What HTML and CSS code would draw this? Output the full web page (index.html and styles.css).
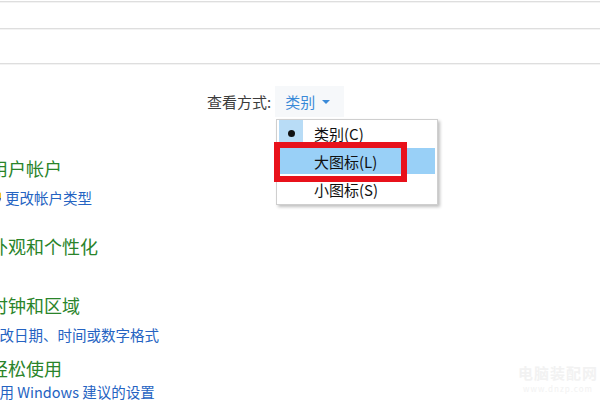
FILE: index.html
```html
<!DOCTYPE html>
<html lang="zh-CN">
<head>
    <meta charset="UTF-8">
    <title>控制面板</title>
    <link rel="stylesheet" href="styles.css">
</head>
<body>
    <div class="window">
        <div class="bar bar-top"></div>
        <div class="bar bar-address"></div>
        <div class="bar bar-search"></div>

        <div class="toolbar">
            <span class="view-label">查看方式:</span>
            <button class="view-button">类别 <span class="caret"></span></button>
        </div>

        <div class="categories">
            <div class="category cat-users">
                <a class="cat-title">用户帐户</a>
                <a class="cat-link with-shield">
                    <svg class="shield" width="16" height="16" viewBox="0 0 16 16">
                        <path d="M8 1 L14 3 V8 C14 11.5 11 14 8 15 C5 14 2 11.5 2 8 V3 Z" fill="#2b5fa8"/>
                        <path d="M8 1 L14 3 V8 H8 Z" fill="#f2c12e"/>
                        <path d="M8 8 H2 C2 11.5 5 14 8 15 Z" fill="#f2c12e"/>
                    </svg>
                    <span>更改帐户类型</span>
                </a>
            </div>
            <div class="category cat-appearance">
                <a class="cat-title">外观和个性化</a>
            </div>
            <div class="category cat-clock">
                <a class="cat-title">时钟和区域</a>
                <a class="cat-link">更改日期、时间或数字格式</a>
            </div>
            <div class="category cat-ease">
                <a class="cat-title">轻松使用</a>
                <a class="cat-link tight">使用 Windows 建议的设置</a>
            </div>
        </div>

        <!-- view menu, opened over the page -->
        <ul class="view-menu">
            <li class="menu-item checked"><span class="check"><span class="dot"></span></span>类别(C)</li>
            <li class="menu-item hover"><span class="check"></span>大图标(L)</li>
            <li class="menu-item"><span class="check"></span>小图标(S)</li>
        </ul>
        <div class="highlight-box"></div>

        <div class="watermark">
            <div class="wm-name">电脑装配网</div>
            <div class="wm-url">www.dnzp.com</div>
        </div>
    </div>
</body>
</html>
```

FILE: styles.css
```css
* {
    box-sizing: border-box;
}

body {
    margin: 0;
    background: #fff;
    font-family: "Noto Sans CJK SC", "Noto Sans", sans-serif;
}

.window {
    position: relative;
    width: 600px;
    height: 400px;
    overflow: hidden;
}

.bar {
    border-bottom: 1px solid #dedede;
    box-shadow: 0 1px 0 #f3f3f3;
}

.bar-top {
    height: 2px;
}

.bar-address {
    height: 27px;
}

.bar-search {
    height: 35px;
}

.toolbar {
    display: flex;
    align-items: center;
    margin-top: 22px;
    height: 31px;
    padding-left: 207px;
}

.view-label {
    font-size: 15px;
    color: #3c3c3c;
    margin-right: 4px;
}

.view-button {
    display: flex;
    align-items: center;
    height: 31px;
    padding: 0 14px 0 10px;
    border: none;
    background: #f6f8fa;
    font-family: inherit;
    font-size: 15px;
    color: #3a8ad8;
}

.caret {
    display: inline-block;
    margin-left: 7px;
    border-left: 4px solid transparent;
    border-right: 4px solid transparent;
    border-top: 4px solid #3a8ad8;
}

.categories {
    margin-left: -10px;
    margin-top: 39px;
}

.category {
    display: flex;
    flex-direction: column;
    align-items: flex-start;
}

.cat-title {
    font-size: 18px;
    line-height: 24px;
    color: #2a842a;
}

.cat-link {
    display: flex;
    align-items: center;
    margin-top: 8px;
    margin-left: -5px;
    font-size: 14.5px;
    line-height: 20px;
    color: #2563c2;
}

.cat-link.tight {
    margin-top: 2px;
}

.with-shield {
    margin-left: -3px;
}

.shield {
    margin-right: 2px;
}

.cat-users {
    margin-bottom: 26px;
}

.cat-appearance {
    margin-bottom: 35px;
}

.cat-clock {
    margin-bottom: 11px;
}

.view-menu {
    position: absolute;
    left: 276px;
    top: 119px;
    width: 162px;
    margin: 0;
    padding: 0 2px 2px;
    list-style: none;
    background: #fff;
    border: 1px solid #cfcfcf;
    box-shadow: 2px 2px 3px rgba(0, 0, 0, 0.25);
}

.menu-item {
    display: flex;
    align-items: center;
    height: 26px;
    margin-bottom: 2px;
    font-size: 15px;
    color: #111;
}

.menu-item:last-child {
    margin-bottom: 0;
}

.menu-item.hover {
    background: #99d0f7;
}

.check {
    display: flex;
    align-items: center;
    justify-content: center;
    width: 24px;
    height: 26px;
    margin-right: 11px;
}

.checked .check {
    background: #b8dcf6;
}

.dot {
    width: 7px;
    height: 7px;
    border-radius: 50%;
    background: #111;
}

.highlight-box {
    position: absolute;
    left: 274px;
    top: 142px;
    width: 133px;
    height: 40px;
    border: 6px solid #e8111b;
}

.watermark {
    position: absolute;
    left: 518px;
    top: 362px;
    color: #f2f2f2;
    text-align: center;
}

.wm-name {
    font-size: 15px;
    font-weight: bold;
    letter-spacing: 1px;
}

.wm-url {
    font-size: 8px;
    letter-spacing: 1px;
}
```
